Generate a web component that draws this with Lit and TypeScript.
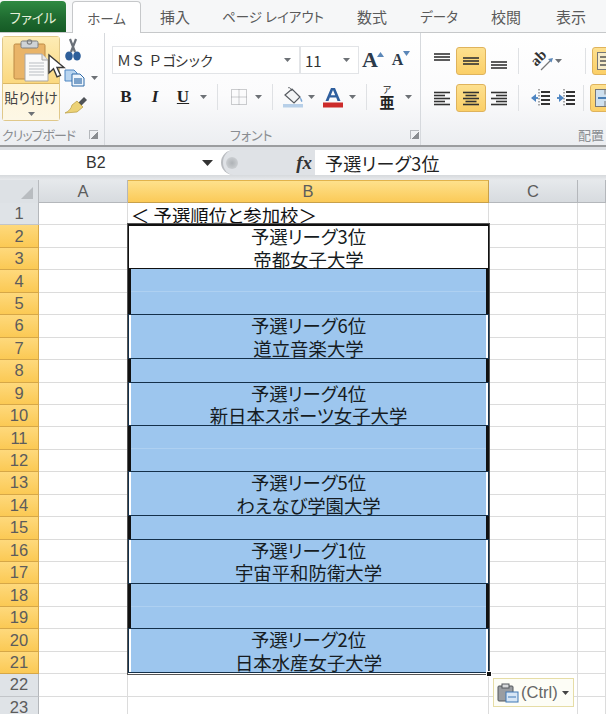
import { LitElement, html, css, svg } from "lit";
import { customElement } from "lit/decorators.js";

const arrow = html`<svg class="arr" width="7" height="4" viewBox="0 0 7 4"><path d="M0 0h7L3.500 4z" fill="#6d7176"/></svg>`;

const lines = (ys: number[], x1: number, x2: number, w = 2, c = "#333") =>
  ys.map((y) => svg`<path d="M${x1} ${y}H${x2}" stroke=${c} stroke-width=${w}/>`);

const alignIcon = (kind: "l" | "c" | "r") => {
  const rows = [16, 11, 16, 11, 16];
  return html`<svg width="18" height="17" viewBox="0 0 18 17">
    ${rows.map((len, i) => {
      const x1 = kind === "l" ? 1 : kind === "r" ? 17 - len : 9 - len / 2;
      return svg`<path d="M${x1} ${2.500 + i * 3}h${len}" stroke="#333" stroke-width="1.600"/>`;
    })}
  </svg>`;
};

const vAlign = (y: number) => html`<svg width="18" height="18" viewBox="0 0 18 18">${lines([y, y + 3, y + 6], 1, 17, 1.600)}</svg>`;

const indentIcon = (flip: boolean) => html`<svg width="20" height="20" viewBox="0 0 20 20">
  <path d="M8 1v18" stroke="#555" stroke-width="1" stroke-dasharray="1.500 1.500"/>
  ${lines([4, 8, 12, 16], 10, 19, 2, "#333")}
  <path d="M1 10h6" stroke="#5b8fc7" stroke-width="2"/>
  <path d=${flip ? "M5 6L0 10l5 4z" : "M3 6l5 4-5 4z"} fill="#4f86c2"/>
</svg>`;

const HEAD_ROWS = Array.from({ length: 22 }, (_, i) => i + 2);

const BLOCKS: { span: number; text?: [string, string]; white?: boolean }[] = [
  { span: 2, text: ["予選リーグ3位", "帝都女子大学"], white: true },
  { span: 2 },
  { span: 2, text: ["予選リーグ6位", "道立音楽大学"] },
  { span: 1 },
  { span: 2, text: ["予選リーグ4位", "新日本スポーツ女子大学"] },
  { span: 2 },
  { span: 2, text: ["予選リーグ5位", "わえなび学園大学"] },
  { span: 1 },
  { span: 2, text: ["予選リーグ1位", "宇宙平和防衛大学"] },
  { span: 2 },
  { span: 2, text: ["予選リーグ2位", "日本水産女子大学"] },
];

@customElement("app-root")
export class AppRoot extends LitElement {
  static styles = css`
    :host {
      display: block;
      position: relative;
      width: 606px;
      height: 714px;
      overflow: hidden;
      background: #fff;
      font-family: "Noto Sans CJK JP", "Liberation Sans", sans-serif;
      color: #333;
    }
    .arr { display: block; }
    /* tabs */
    .tabs {
      display: flex;
      height: 33px;
      box-sizing: border-box;
      background: #f6f7f8;
      border-bottom: 1px solid #c6c8ca;
      font-size: 15px;
      color: #5a5a5a;
    }
    .tab { display: flex; align-items: center; justify-content: center; height: 32px; white-space: nowrap; font-feature-settings: "palt"; }
    .tab.kana { font-size: 13.5px; }
    .tab.file {
      width: 66px;
      margin-top: 1px;
      height: 31px;
      color: #e4f0d8;
      border-radius: 4px 4px 0 0;
      background: linear-gradient(#2f8a42, #1f6b30 55%, #155a25);
    }
    .tab.home {
      width: 69px;
      margin: 1px 0 -1px 6px;
      height: 32px;
      box-sizing: border-box;
      background: #fff;
      border: 1px solid #c6c8ca;
      border-bottom: none;
      border-radius: 4px 4px 0 0;
    }
    /* ribbon */
    .ribbon {
      display: flex;
      height: 114px;
      box-sizing: border-box;
      border-bottom: 2px solid #9b9d9f;
      background: linear-gradient(#fff, #fbfbfc 55%, #eceef1);
    }
    .group { display: flex; flex-direction: column; border-right: 1px solid #d6d9dd; box-sizing: border-box; }
    .g-clip { width: 105px; }
    .g-font { width: 316px; }
    .g-align { flex: 1; border-right: none; overflow: hidden; }
    .body { height: 91px; box-sizing: border-box; }
    .label {
      display: flex;
      align-items: center;
      height: 21px;
      font-size: 13px;
      color: #8a8d91;
      white-space: nowrap;
      font-feature-settings: "palt";
    }
    .launcher { width: 9px; height: 9px; border: 1px solid #b4b7bb; border-width: 1px 0 0 1px; position: relative; box-sizing: border-box; background: linear-gradient(135deg, transparent 55%, #8a8d91 55%); }

    /* clipboard */
    .g-clip .body { display: flex; padding: 3px 0 0 2px; }
    .paste {
      width: 58px;
      height: 85px;
      box-sizing: border-box;
      border: 1px solid #e0c88a;
      border-radius: 3px;
      display: flex;
      flex-direction: column;
      align-items: center;
      background: linear-gradient(#fdeeb8, #fde39a 45%, #fff4cf);
    }
    .paste-top { height: 47px; width: 100%; display: flex; justify-content: center; align-items: flex-end; box-sizing: border-box; border-bottom: 1px solid #dcb765; background: linear-gradient(#fdecb5, #fbd87f); }
    .paste-bot { flex: 1; width: 100%; display: flex; flex-direction: column; align-items: center; background: linear-gradient(#fff5d8, #fdf7e6); }
    .paste-text { font-size: 14px; line-height: 20px; margin-top: 3px; color: #444; white-space: nowrap; font-feature-settings: "palt"; }
    .paste-bot .arr { margin-top: 5px; }
    .clip-tools { display: flex; flex-direction: column; padding-left: 4px; }
    .clip-tool { height: 28px; display: flex; align-items: center; gap: 5px; }
    .g-clip .label { padding-left: 2px; justify-content: space-between; padding-right: 6px; }
    .g-clip .label span { letter-spacing: -1px; }

    /* font */
    .g-font .body { padding: 13px 0 0 7px; display: flex; flex-direction: column; gap: 9px; }
    .row { display: flex; align-items: center; height: 28px; }
    .select {
      height: 28px;
      box-sizing: border-box;
      border: 1px solid #e2e4e7;
      background: #fff;
      display: flex;
      align-items: center;
      justify-content: space-between;
      padding: 0 8px 0 4px;
      font-size: 14px;
      color: #333;
      white-space: nowrap;
    }
    .s-font { width: 188px; }
    .s-font .kn { letter-spacing: -1.500px; }
    .s-size { width: 59px; font-size: 15px; }
    .cell { display: flex; align-items: center; justify-content: center; height: 28px; flex: none; }
    .w8 { width: 8px; } .w14 { width: 14px; } .w20 { width: 20px; } .w22 { width: 22px; } .w26 { width: 26px; } .w28 { width: 28px; } .w30 { width: 30px; }
    .sep { width: 1px; height: 26px; background: #dfe1e4; flex: none; }
    .fmt { font-family: "Liberation Serif", serif; font-size: 17px; font-weight: 700; color: #222; }
    .fmt.i { font-style: italic; }
    .fmt.u { text-decoration: underline; }
    .grow { font-family: "Liberation Serif", serif; font-weight: 700; color: #2c3a4a; position: relative; line-height: 1; }
    .furi { display: flex; flex-direction: column; align-items: center; color: #222; line-height: 1; }
    .furi .ru { font-size: 9px; height: 8px; line-height: 8px; }
    .furi .ba { font-size: 15px; font-weight: 700; }
    .g-font .label { padding-left: 125px; justify-content: flex-start; gap: 137px; }

    /* align */
    .g-align .body { padding: 14px 0 0 12px; display: flex; flex-direction: column; gap: 9px; }
    .g-align .row { height: 28px; }
    .tiny { width: 18px; height: 28px; display: flex; align-items: center; justify-content: center; flex: none; }
    .on {
      width: 30px;
      height: 28px;
      box-sizing: border-box;
      border: 1px solid #dfb35c;
      border-radius: 3px;
      background: linear-gradient(#fde08f, #fbcf67);
      display: flex;
      align-items: center;
      justify-content: center;
      flex: none;
    }
    .on.mid { margin: 0 4px 0 5px; }
    .s1 { margin: 0 10px; }
    .orient { width: 33px; margin-left: 1px; display: flex; align-items: center; gap: 0; flex: none; }
    .wrap-sep { margin: 0 6px 0 22px; }
    .in1 { margin-left: 2px; width: 22px; display: flex; }
    .in2 { width: 21px; margin-left: 5px; display: flex; }
    .g-align .label { padding-left: 157px; }

    /* formula bar */
    .gap { height: 3px; background: #dde0e4; }
    .fbar { display: flex; height: 25px; background: #fff; }
    .name {
      width: 221px;
      flex: none;
      display: flex;
      align-items: center;
      font-family: "Liberation Sans", sans-serif;
      font-size: 16px;
      color: #333;
      padding-left: 86px;
      box-sizing: border-box;
      gap: 96px;
    }
    .pill {
      width: 94px;
      flex: none;
      box-sizing: border-box;
      background: #dfe2e6;
      border-radius: 13px 0 0 13px;
      border-left: 2px solid #b9bcc0;
      display: flex;
      align-items: center;
      justify-content: space-between;
      padding: 0 3px 0 3px;
    }
    .knob { width: 12px; height: 12px; border-radius: 50%; background: radial-gradient(#aeb2b6, #d6d9dc); }
    .fx { font-family: "Liberation Serif", serif; font-style: italic; font-weight: 700; font-size: 19px; color: #333; }
    .finput { flex: 1; display: flex; align-items: center; padding-left: 10px; font-size: 18px; color: #222; white-space: nowrap; font-feature-settings: "palt"; letter-spacing: 0.3px; }
    .gap2 { height: 5px; background: linear-gradient(#d6d9dc, #e8eaed); }

    /* sheet */
    .sheet {
      display: grid;
      grid-template-columns: 39px 89px 361px 89px 28px;
      grid-template-rows: 23px repeat(23, 22.45px);
    }
    .corner { background: #dde1e5; border-right: 1px solid #b8bbbf; box-sizing: border-box; display: flex; align-items: flex-end; justify-content: flex-end; padding: 0 5px 4px 0; }
    .ch {
      display: flex;
      align-items: center;
      justify-content: center;
      font-family: "Liberation Sans", sans-serif;
      font-size: 16.5px;
      color: #5c5c5c;
      background: linear-gradient(#e6e9ec, #d7dbdf);
      border-right: 1px solid #b4b7bb;
      border-bottom: 1px solid #b4b7bb;
      box-sizing: border-box;
    }
    .ch.sel { background: linear-gradient(#fee18c, #fbca58); border-color: #c8a04a; border-top: 1px solid #e1b34c; }
    .rh {
      display: flex;
      align-items: center;
      justify-content: center;
      font-family: "Liberation Sans", sans-serif;
      font-size: 16.5px;
      color: #5c5c5c;
      background: #dfe3e7;
      border-right: 1px solid #b4b7bb;
      border-bottom: 1px solid #c2c5c9;
      box-sizing: border-box;
    }
    .rh.sel { background: linear-gradient(#fed97c, #fbc954); border-color: #d6a747; }
    .c { border-right: 1px solid #dcdcdc; border-bottom: 1px solid #dcdcdc; box-sizing: border-box; }
    .title {
      font-size: 18.400px;
      color: #111;
      display: flex;
      align-items: flex-end;
      padding-left: 3px;
      line-height: 20px;
      white-space: nowrap;
      border-bottom: none;
      font-feature-settings: "palt";
    }
    .bcol {
      grid-column: 3;
      grid-row: 3 / span 20;
      display: flex;
      flex-direction: column;
      position: relative;
      outline: 1px solid #555;
      box-sizing: border-box;
      margin-top: -1px;
    }
    .block {
      background: #9dc6ee;
      box-sizing: border-box;
      border-left: 3px solid #111;
      border-right: 3px solid #111;
      position: relative;
    }
    .block.split::after {
      content: "";
      display: block;
      height: 1px;
      background: #aed0f1;
      margin-top: 22px;
    }
    .block.txt {
      border: 1px solid #14304a;
      box-shadow: inset 2px 0 0 #fff, inset -2px 0 0 #fff;
      text-align: center;
      font-size: 18.400px;
      color: #161c22;
      font-feature-settings: "palt";
      white-space: nowrap;
    }
    .cell-line { height: 22.500px; line-height: 22.500px; }
    .cell-line.first-line { margin-top: -1px; }
    .block.white { background: #fff; border-color: #111; }
    .block.first { border-top-width: 2px; }
    .handle {
      position: absolute;
      right: -3px;
      bottom: -3px;
      width: 6px;
      height: 6px;
      background: #111;
      border: 1px solid #fff;
      box-sizing: border-box;
    }
    .paste-opt {
      position: absolute;
      left: 493px;
      top: 678px;
      width: 81px;
      height: 29px;
      box-sizing: border-box;
      border: 1px solid #e6dda6;
      background: #fdfdf6;
      display: flex;
      align-items: center;
      padding-left: 3px;
      gap: 2px;
      font-family: "Liberation Sans", sans-serif;
      font-size: 16.5px;
      color: #666;
    }
    .cursor { position: absolute; left: 47px; top: 53px; }
  `;

  private clipboardBig() {
    return html`<svg width="36" height="44" viewBox="0 0 36 44">
      <rect x="1" y="5" width="31" height="35" rx="1.500" fill="#e9b468" stroke="#bd8a45"/>
      <rect x="8" y="2" width="17" height="7" rx="1.500" fill="#cfd3d6" stroke="#7d7f80"/>
      <circle cx="16.500" cy="3" r="2.200" fill="none" stroke="#7d7f80" stroke-width="1.200"/>
      <path d="M12 15h17l6 6v21H12z" fill="#fafafa" stroke="#a8a8a8"/>
      <path d="M29 15v6h6" fill="#e8e8e8" stroke="#a8a8a8"/>
      ${lines([24, 27, 30, 33, 36], 16, 31, 1, "#b9bdc2")}
    </svg>`;
  }

  private row2() {
    return html`<div class="row">
      <div class="cell w28 fmt">B</div>
      <div class="cell w30 fmt i">I</div>
      <div class="cell w26 fmt u">U</div>
      <div class="cell w14">${arrow}</div>
      <div class="cell w14"><div class="sep"></div></div>
      <div class="cell w30">
        <svg width="16" height="16" viewBox="0 0 16 16"><path d="M.5.5h15v15H.5zM8 .5v15M.5 8h15" fill="none" stroke="#9a9da1" stroke-dasharray="1 1"/></svg>
      </div>
      <div class="cell w8">${arrow}</div>
      <div class="cell w20"><div class="sep"></div></div>
      <div class="cell w22">
        <svg width="22" height="22" viewBox="0 0 22 22">
          <path d="M3 9l7-6 8 8-6 6z" fill="#f4f5f6" stroke="#565a60" stroke-width="1.200"/>
          <path d="M6 2c1-1 3 0 4 3" fill="none" stroke="#565a60"/>
          <path d="M18 11c2 2 3 4 2 5-1 0-2-2-2-5z" fill="#7aa6d4"/>
          <rect x="1" y="18" width="20" height="3.500" fill="#b7cfe8"/>
        </svg>
      </div>
      <div class="cell w14">${arrow}</div>
      <div class="cell w30">
        <svg width="22" height="24" viewBox="0 0 22 24">
          <path d="M3.500 16L9 3h4l5.500 13h-3l-1.300-3.500H7.800L6.500 16z M8.800 10.300h4.400L11 5z" fill="#2f5f9e" fill-rule="evenodd"/>
          <rect x="1" y="17.500" width="20" height="5" fill="#cc2b2b"/>
        </svg>
      </div>
      <div class="cell w8">${arrow}</div>
      <div class="cell w20"><div class="sep"></div></div>
      <div class="cell w22"><div class="furi"><span class="ru">ア</span><span class="ba">亜</span></div></div>
      <div class="cell w20">${arrow}</div>
    </div>`;
  }

  render() {
    return html`
      <div class="tabs">
        <div class="tab kana file">ファイル</div>
        <div class="tab kana home">ホーム</div>
        <div class="tab" style="width:68px">挿入</div>
        <div class="tab kana" style="width:128px">ページ レイアウト</div>
        <div class="tab" style="width:70px">数式</div>
        <div class="tab kana" style="width:64px">データ</div>
        <div class="tab" style="width:70px">校閲</div>
        <div class="tab" style="width:60px">表示</div>
      </div>
      <div class="ribbon">
        <div class="group g-clip">
          <div class="body">
            <div class="paste">
              <div class="paste-top">${this.clipboardBig()}</div>
              <div class="paste-bot">
                <div class="paste-text">貼り付け</div>
                ${arrow}
              </div>
            </div>
            <div class="clip-tools">
              <div class="clip-tool">
                <svg width="18" height="24" viewBox="0 0 18 24">
                  <path d="M6 1l5 13M12 1L7 14" stroke="#6a7078" stroke-width="2.200" fill="none"/>
                  <ellipse cx="5" cy="18" rx="3.800" ry="4.500" fill="#2e5f9a"/><ellipse cx="13" cy="18" rx="3.800" ry="4.500" fill="#2e5f9a"/>
                </svg>
              </div>
              <div class="clip-tool">
                <svg width="22" height="18" viewBox="0 0 22 18">
                  <path d="M1 1h9l3 3v8H1z" fill="#b9d5f0" stroke="#4f86c2"/>
                  <path d="M8 5h8l4 4v8H8z" fill="#eef5fc" stroke="#2f6aa8"/>
                  ${lines([10, 12, 14], 10, 18, 1.200, "#2f6aa8")}
                </svg>
                ${arrow}
              </div>
              <div class="clip-tool">
                <svg width="24" height="22" viewBox="0 0 24 22">
                  <path d="M14 8l6-6 3 3-6 6z" fill="#4f5358"/>
                  <path d="M13 6l6 6-6 5L1 18c4-2 6-4 7-8z" fill="#ecd277" stroke="#b89b3e" stroke-width=".7"/>
                </svg>
              </div>
            </div>
          </div>
          <div class="label">
            <span>クリップボード</span>
            <div class="launcher"></div>
          </div>
        </div>

        <div class="group g-font">
          <div class="body">
            <div class="row">
              <div class="select s-font"><span>ＭＳ Ｐ<span class="kn">ゴシック</span></span>${arrow}</div>
              <div class="select s-size"><span>11</span>${arrow}</div>
              <div class="cell w28 grow" style="font-size:22px">A<svg width="7" height="5" viewBox="0 0 7 5" style="margin:-12px 0 0 -1px"><path d="M0 5L3.500 0 7 5z" fill="#5b87b8"/></svg></div>
              <div class="cell w28 grow" style="font-size:16px">A<svg width="7" height="5" viewBox="0 0 7 5" style="margin:-14px 0 0 0"><path d="M0 0L3.500 5 7 0z" fill="#5b87b8"/></svg></div>
            </div>
            ${this.row2()}
          </div>
          <div class="label"><span>フォント</span><div class="launcher"></div></div>
        </div>

        <div class="group g-align">
          <div class="body">
            <div class="row">
              <div class="tiny">${vAlign(2)}</div>
              <div class="on mid">${vAlign(6)}</div>
              <div class="tiny">${vAlign(10)}</div>
              <div class="sep s1"></div>
              <div class="orient">
                <svg width="25" height="24" viewBox="0 0 25 24">
                  <text x="0" y="13" font-family="Liberation Serif, serif" font-size="15" font-weight="700" fill="#333" transform="rotate(-45 9 8)">ab</text>
                  <path d="M11 21L21 11" stroke="#777" stroke-width="1.200"/>
                  <path d="M23 9l-5 1 3.500 3.500z" fill="#5b87b8"/>
                </svg>
                ${arrow}
              </div>
              <div class="sep wrap-sep"></div>
              <div class="on">
                <svg width="20" height="18" viewBox="0 0 20 18"><rect x=".5" y=".5" width="19" height="17" fill="#f7ecc8" stroke="#777"/>${lines([5, 9, 13], 3, 17, 1.500, "#555")}</svg>
              </div>
            </div>
            <div class="row">
              <div class="tiny">${alignIcon("l")}</div>
              <div class="on mid">${alignIcon("c")}</div>
              <div class="tiny">${alignIcon("r")}</div>
              <div class="sep s1"></div>
              <div class="in1">${indentIcon(true)}</div>
              <div class="in2">${indentIcon(false)}</div>
              <div class="sep" style="margin:0 6px 0 7px"></div>
              <div class="on">
                <svg width="20" height="18" viewBox="0 0 20 18"><rect x=".5" y=".5" width="19" height="17" fill="#cfe0ee" stroke="#777"/><path d="M3 9h14" stroke="#4a7fb5" stroke-width="2"/><path d="M10 .5v5M10 12v5.500" stroke="#777"/></svg>
              </div>
            </div>
          </div>
          <div class="label"><span>配置</span></div>
        </div>
      </div>

      <div class="gap"></div>
      <div class="fbar">
        <div class="name">
          <span>B2</span>
          <svg width="11" height="6" viewBox="0 0 11 6"><path d="M0 0h11L5.500 6z" fill="#333"/></svg>
        </div>
        <div class="pill"><div class="knob"></div><span class="fx">fx</span></div>
        <div class="finput">予選リーグ3位</div>
      </div>
      <div class="gap2"></div>

      <div class="sheet">
        <div class="corner"><svg width="12" height="12" viewBox="0 0 12 12"><path d="M12 0v12H0z" fill="#b8bcc0"/></svg></div>
        <div class="ch">A</div>
        <div class="ch sel">B</div>
        <div class="ch">C</div>
        <div class="ch"></div>

        <div class="rh">1</div>
        <div class="c"></div>
        <div class="c title">＜ 予選順位と参加校＞</div>
        <div class="c"></div>
        <div class="c"></div>

        ${HEAD_ROWS.map((n) => html`
          <div class="rh ${n <= 21 ? "sel" : ""}" style="grid-column:1;grid-row:${n + 1}">${n}</div>
          <div class="c" style="grid-column:2;grid-row:${n + 1}"></div>
          ${n > 21 ? html`<div class="c" style="grid-column:3;grid-row:${n + 1}"></div>` : ""}
          <div class="c" style="grid-column:4;grid-row:${n + 1}"></div>
          <div class="c" style="grid-column:5;grid-row:${n + 1}"></div>
        `)}

        <div class="bcol">
          ${BLOCKS.map((b, i) => html`
            <div
              class="block ${b.text ? "txt" : ""} ${b.text ? "" : b.span === 2 ? "split" : ""} ${b.white ? "white" : ""} ${i === 0 ? "first" : ""}"
              style="height:${b.span * 22.45}px"
            >
              ${b.text
                ? html`<div class="cell-line first-line">${b.text[0]}</div><div class="cell-line">${b.text[1]}</div>`
                : ""}
            </div>
          `)}
          <div class="handle"></div>
        </div>
      </div>

      <svg class="cursor" width="20" height="27" viewBox="0 0 20 27">
        <path d="M2 2v18l4.500-4.200 3.500 8 3.500-1.500-3.500-7.800H17z" fill="#fff" stroke="#3a3a3a" stroke-width="1.400"/>
      </svg>

      <div class="paste-opt">
        <svg width="22" height="20" viewBox="0 0 22 20">
          <rect x="1" y="3" width="15" height="15" rx="1" fill="#9a9da1" stroke="#55585c"/>
          <rect x="5" y="1" width="7" height="4" fill="#d8dadc" stroke="#55585c"/>
          <rect x="9" y="9" width="12" height="10" fill="#d6e6f6" stroke="#3f78b5"/>
          <path d="M11 14h8" stroke="#3f78b5"/>
        </svg>
        <span>(Ctrl)</span>
        <svg width="7" height="4" viewBox="0 0 7 4" style="margin-left:2px"><path d="M0 0h7L3.500 4z" fill="#444"/></svg>
      </div>
    `;
  }
}
